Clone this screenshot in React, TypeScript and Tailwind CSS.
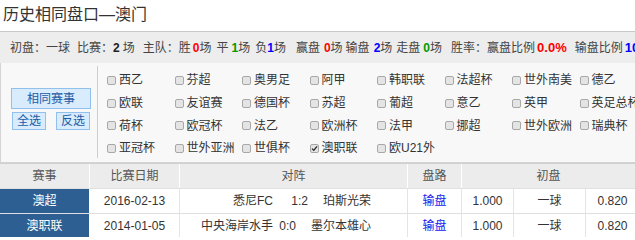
import React from "react";

const FONT = { fontFamily: '"Liberation Sans", "Noto Sans CJK SC", sans-serif' };

const rows: { label: string; checked?: boolean }[][] = [
  [{ label: "西乙" }, { label: "芬超" }, { label: "奥男足" }, { label: "阿甲" }, { label: "韩职联" }, { label: "法超杯" }, { label: "世外南美" }, { label: "德乙" }],
  [{ label: "欧联" }, { label: "友谊赛" }, { label: "德国杯" }, { label: "苏超" }, { label: "葡超" }, { label: "意乙" }, { label: "英甲" }, { label: "英足总杯" }],
  [{ label: "荷杯" }, { label: "欧冠杯" }, { label: "法乙" }, { label: "欧洲杯" }, { label: "法甲" }, { label: "挪超" }, { label: "世外欧洲" }, { label: "瑞典杯" }],
  [{ label: "亚冠杯" }, { label: "世外亚洲" }, { label: "世俱杯" }, { label: "澳职联", checked: true }, { label: "欧U21外" }],
];

function Box({ checked }: { checked?: boolean }) {
  return (
    <span className="w-[9px] h-[9px] rounded-[2px] border border-[#a8a8a8] bg-[#e4e4e4] flex items-center justify-center shrink-0">
      {checked && (
        <svg width="7" height="7" viewBox="0 0 7 7">
          <path d="M1 3.6 L2.8 5.4 L6 1.4" stroke="#222" strokeWidth="1.3" fill="none" />
        </svg>
      )}
    </span>
  );
}

const matches = [
  { league: "澳超", date: "2016-02-13", home: "悉尼FC", score: "1:2", away: "珀斯光荣", h: "h-[25px]" },
  { league: "澳职联", date: "2014-01-05", home: "中央海岸水手", score: "0:0", away: "墨尔本雄心", h: "h-[24px]" },
];

export default function App() {
  return (
    <div className="w-[635px] h-[240px] overflow-hidden bg-white text-[#333]" style={FONT}>
      <div className="w-[700px]">
        {/* Title */}
        <div className="h-[31px] pl-[3px] pt-[3px] text-[16px] leading-[24px] text-[#333]">历史相同盘口—澳门</div>

        {/* Summary bar */}
        <div className="h-[32px] border-t border-[#c8c8c8] bg-[#ededed] flex items-center pl-[10px] text-[12px] whitespace-nowrap text-[#444]">
          <span>初盘：一球</span>
          <span className="ml-[7px]">比赛：</span>
          <b className="text-[#222]">2</b>
          <span className="ml-[3px]">场</span>
          <span className="ml-[8px]">主队：胜</span>
          <b className="ml-[2px] text-[#ff0000]">0</b>
          <span>场</span>
          <span className="ml-[5px]">平</span>
          <b className="ml-[3px] text-[#009900]">1</b>
          <span>场</span>
          <span className="ml-[5px]">负</span>
          <b className="text-[#0000ff]">1</b>
          <span>场</span>
          <span className="ml-[10px]">赢盘</span>
          <b className="ml-[4px] text-[#ff0000]">0</b>
          <span>场</span>
          <span className="ml-[3px]">输盘</span>
          <b className="ml-[4px] text-[#0000ff]">2</b>
          <span>场</span>
          <span className="ml-[4px]">走盘</span>
          <b className="ml-[3px] text-[#009900]">0</b>
          <span>场</span>
          <span className="ml-[9px]">胜率：赢盘比例</span>
          <b className="ml-[2px] text-[#ff0000] text-[13px]">0.0%</b>
          <span className="ml-[8px]">输盘比例</span>
          <b className="ml-[2px] text-[#0000ff] text-[13px]">100.0%</b>
        </div>

        {/* Filter area */}
        <div className="h-[100px] border-l border-b border-[#d4d4d4] bg-[#f8f8f8] flex">
          <div className="w-[96px] shrink-0 flex flex-col pl-[10px] pt-[25px] gap-[3px]">
            <button className="w-[80px] h-[21px] border border-[#8fc1ec] bg-[#d8ecfd] text-[#1d5aa6] text-[12px] leading-none">相同赛事</button>
            <div className="flex gap-[10px] pl-[1px]">
              <button className="w-[34px] h-[18px] border border-[#8fc1ec] bg-[#d8ecfd] text-[#1d5aa6] text-[12px] leading-none">全选</button>
              <button className="w-[34px] h-[18px] border border-[#8fc1ec] bg-[#d8ecfd] text-[#1d5aa6] text-[12px] leading-none">反选</button>
            </div>
          </div>
          <div className="w-px bg-[#bcd2e8] mt-[3px] h-[92px] shrink-0" />
          <div className="pl-[9px] pt-[6px] flex flex-col">
            {rows.map((r, i) => (
              <div key={i} className="flex h-[22.7px] items-center">
                {r.map((c) => (
                  <div key={c.label} className="w-[67.5px] shrink-0 flex items-center gap-[3px] text-[12px] text-[#333] whitespace-nowrap">
                    <Box checked={c.checked} />
                    <span>{c.label}</span>
                  </div>
                ))}
              </div>
            ))}
          </div>
        </div>

        {/* Table */}
        <div className="border-t border-[#cfcfcf] text-[12px]">
          <div className="flex h-[24px] bg-[#ececec] text-[#555]">
            <div className="w-[90px] border-r border-white flex items-center justify-center">赛事</div>
            <div className="w-[90px] border-r border-white flex items-center justify-center">比赛日期</div>
            <div className="w-[228px] border-r border-white flex items-center justify-center">对阵</div>
            <div className="w-[54px] border-r border-white flex items-center justify-center">盘路</div>
            <div className="w-[173px] flex items-center justify-center">初盘</div>
          </div>
          {matches.map((m) => (
            <div key={m.date} className={`flex ${m.h} border-t border-[#e0e0e0]`}>
              <div className="w-[90px] bg-[#2e5f92] text-white flex items-center justify-center border-r border-white">{m.league}</div>
              <div className="w-[90px] border-r border-[#e4e4e4] flex items-center justify-center text-[#333]">{m.date}</div>
              <div className="w-[228px] border-r border-[#e4e4e4] flex items-center text-[#333]">
                <div className="w-[95px] text-right pr-[2px] whitespace-nowrap">{m.home}</div>
                <div className="flex-1 flex justify-end pr-[36px] gap-[15px] whitespace-nowrap">
                  <span>{m.score}</span>
                  <span>{m.away}</span>
                </div>
              </div>
              <div className="w-[54px] border-r border-[#e4e4e4] flex items-center justify-center text-[#2020f0]">输盘</div>
              <div className="w-[52px] border-r border-[#e4e4e4] flex items-center justify-center text-[#333]">1.000</div>
              <div className="w-[72px] border-r border-[#e4e4e4] flex items-center justify-center text-[#333]">一球</div>
              <div className="w-[49px] flex items-center justify-center pl-[4px] text-[#333]">0.820</div>
            </div>
          ))}
        </div>
      </div>
    </div>
  );
}
